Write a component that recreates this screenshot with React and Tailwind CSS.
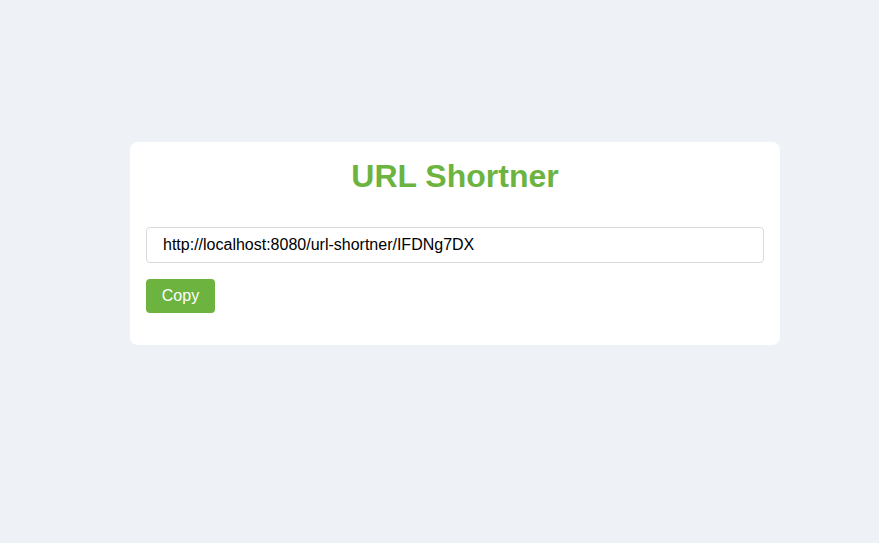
import React, { useState } from 'react';

function App() {
  const [url] = useState('http://localhost:8080/url-shortner/IFDNg7DX');

  return (
    <div
      className="min-h-screen w-full bg-[#eef2f7] pt-[142px]"
      style={{ fontFamily: '"Liberation Sans", Arial, sans-serif' }}
    >
      <div className="ml-[130px] w-[650px] rounded-lg bg-white px-4 pt-4 pb-8">
        <h1 className="text-center text-[32px] font-bold leading-[37px] text-[#6db33f]">
          URL Shortner
        </h1>

        <input
          className="mt-8 block h-9 w-full rounded border border-[#d6d9dd] bg-white pl-4 text-base text-black outline-none"
          type="text"
          value={url}
          readOnly
        />

        <button className="mt-4 flex h-[34px] w-[69px] items-center justify-center rounded bg-[#6db33f] text-base text-white">
          Copy
        </button>
      </div>
    </div>
  );
}

export default App;
